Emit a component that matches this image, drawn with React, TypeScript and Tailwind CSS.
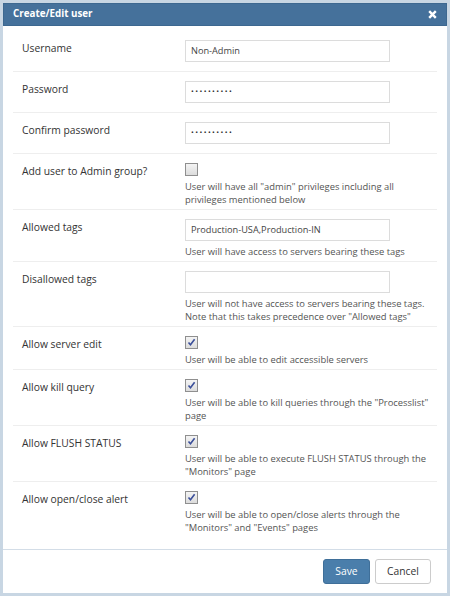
import React from "react";

type Row = {
  label: string;
  kind: "text" | "password" | "check";
  value?: string;
  checked?: boolean;
  help?: string[];
};

const rows: Row[] = [
  { label: "Username", kind: "text", value: "Non-Admin" },
  { label: "Password", kind: "password" },
  { label: "Confirm password", kind: "password" },
  {
    label: "Add user to Admin group?",
    kind: "check",
    checked: false,
    help: ['User will have all "admin" privileges including all', "privileges mentioned below"],
  },
  {
    label: "Allowed tags",
    kind: "text",
    value: "Production-USA,Production-IN",
    help: ["User will have access to servers bearing these tags"],
  },
  {
    label: "Disallowed tags",
    kind: "text",
    value: "",
    help: ["User will not have access to servers bearing these tags.", 'Note that this takes precedence over "Allowed tags"'],
  },
  {
    label: "Allow server edit",
    kind: "check",
    checked: true,
    help: ["User will be able to edit accessible servers"],
  },
  {
    label: "Allow kill query",
    kind: "check",
    checked: true,
    help: ['User will be able to kill queries through the "Processlist"', "page"],
  },
  {
    label: "Allow FLUSH STATUS",
    kind: "check",
    checked: true,
    help: ["User will be able to execute FLUSH STATUS through the", '"Monitors" page'],
  },
  {
    label: "Allow open/close alert",
    kind: "check",
    checked: true,
    help: ["User will be able to open/close alerts through the", '"Monitors" and "Events" pages'],
  },
];

const Checkbox = ({ checked }: { checked?: boolean }) => (
  <span className="flex h-[13px] w-[13px] items-center justify-center border border-[#8f8f8f] bg-gradient-to-b from-[#f4f4f4] to-[#dcdcdc]">
    {checked && (
      <svg width="9" height="9" viewBox="0 0 9 9">
        <path d="M1.5 4.5 L3.5 6.8 L7.6 1.3" fill="none" stroke="#3b4f9a" strokeWidth="1.6" />
      </svg>
    )}
  </span>
);

const FormRow = ({ row, last }: { row: Row; last: boolean }) => {
  const hasHelp = !!row.help;
  return (
    <div
      className={`flex px-[9px] pt-[9px] ${hasHelp ? "pb-[3px]" : "pb-[9px]"} ${
        last ? "" : "border-b border-[#eeeeee]"
      }`}
    >
      <div className="w-[163px] shrink-0 whitespace-nowrap pt-[1px] text-[10.3px] leading-[14px] text-[#333]">
        {row.label}
      </div>
      <div className="flex flex-col">
        {row.kind === "check" ? (
          <div className="h-[13px]">
            <Checkbox checked={row.checked} />
          </div>
        ) : (
          <div className="flex h-[22px] w-[205px] items-center border border-[#dcdcdc] bg-white px-[5px] text-[9.2px] text-[#444]">
            {row.kind === "password" ? (
              <span className="text-[7.5px] tracking-[1.4px] text-[#333]">••••••••••</span>
            ) : (
              row.value
            )}
          </div>
        )}
        {row.help && (
          <div className="mt-[4px] whitespace-nowrap text-[9.4px] leading-[13px] text-[#555]">
            {row.help.map((line, i) => (
              <div key={i} className="h-[13px]">
                {line}
              </div>
            ))}
          </div>
        )}
      </div>
    </div>
  );
};

export default function App() {
  return (
    <div
      className="h-[596px] w-[450px] bg-[#c8d6e3] p-[3px]"
      style={{ fontFamily: '"Open Sans", "Liberation Sans", sans-serif' }}
    >
      <div className="flex h-full flex-col bg-white">
        {/* Header */}
        <div className="flex h-[23px] shrink-0 items-center justify-between border border-[#3d6890] bg-[#45719b] px-[9px]">
          <span className="text-[9.8px] font-bold text-white">Create/Edit user</span>
          <svg width="9" height="9" viewBox="0 0 9 9">
            <path d="M1.2 1.2 L7.8 7.8 M7.8 1.2 L1.2 7.8" stroke="white" strokeWidth="2.4" />
          </svg>
        </div>

        {/* Body */}
        <div className="mx-[10px] mt-[5px] flex-1">
          {rows.map((row, i) => (
            <FormRow key={row.label} row={row} last={i === rows.length - 1} />
          ))}
        </div>

        {/* Footer */}
        <div className="flex justify-end gap-[5px] border-t border-[#d3dde7] px-[16px] pb-[9px] pt-[9px]">
          <button className="h-[25px] w-[47px] rounded-[3px] border border-[#3f6f99] bg-[#4a7eab] text-[10.3px] text-white">
            Save
          </button>
          <button className="h-[25px] w-[56px] rounded-[3px] border border-[#cccccc] bg-white text-[10.3px] text-[#333]">
            Cancel
          </button>
        </div>
      </div>
    </div>
  );
}
